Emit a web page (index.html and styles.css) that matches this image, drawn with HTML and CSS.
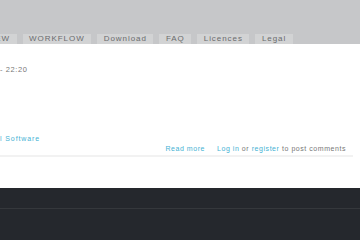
FILE: index.html
```html
<!DOCTYPE html>
<html>
<head>
<meta charset="utf-8">
<link rel="stylesheet" href="styles.css">
</head>
<body>
<header class="header">
  <nav class="tabs">
    <a class="tab tab-first">OVERVIEW</a>
    <a class="tab">WORKFLOW</a>
    <a class="tab">Download</a>
    <a class="tab">FAQ</a>
    <a class="tab">Licences</a>
    <a class="tab">Legal</a>
  </nav>
</header>
<main class="content">
  <div class="post">
    <div class="meta">- 22:20</div>
    <div class="tags"><a class="link">l Software</a></div>
    <div class="links">
      <a class="link">Read more</a>
      <span class="comments"><a class="link">Log in</a> or <a class="link">register</a> to post comments</span>
    </div>
  </div>
  <div class="sep"></div>
</main>
<footer class="footer">
  <div class="footer-top"></div>
  <div class="footer-bottom"></div>
</footer>
</body>
</html>
```
FILE: styles.css
```css
html, body {
  margin: 0;
  padding: 0;
  background: #fff;
  font-family: "Liberation Sans", Arial, sans-serif;
}
.header {
  background: #c6c7c9;
  height: 44px;
  display: flex;
  align-items: flex-end;
  overflow: hidden;
}
.tabs {
  display: flex;
  gap: 6px;
  margin-left: -47px;
  height: 10px;
}
.tab {
  background: #d2d3d4;
  color: #6a6b6d;
  font-size: 8px;
  letter-spacing: 0.95px;
  line-height: 10px;
  padding: 0 6.5px;
  white-space: nowrap;
}
.content {
  height: 144px;
  overflow: hidden;
}
.post {
  padding: 21px 0 0 0;
  font-size: 7px;
  color: #777;
  letter-spacing: 0.9px;
  height: 90px;
}
.meta {
  line-height: 9px;
  font-size: 7.5px;
  letter-spacing: 0.6px;
}
.tags {
  margin-top: 60px;
  line-height: 9px;
}
.link {
  color: #45b2d4;
}
.links {
  display: flex;
  justify-content: flex-end;
  gap: 12px;
  padding-right: 14px;
  line-height: 9px;
  margin-top: 1px;
  letter-spacing: 0.55px;
}
.comments {
  color: #777;
}
.sep {
  height: 2px;
  background: #f2f2f2;
  width: 353px;
}
.footer {
  background: #25282d;
  height: 52px;
}
.footer-top {
  height: 20px;
  border-bottom: 1px solid #35383c;
}
```
